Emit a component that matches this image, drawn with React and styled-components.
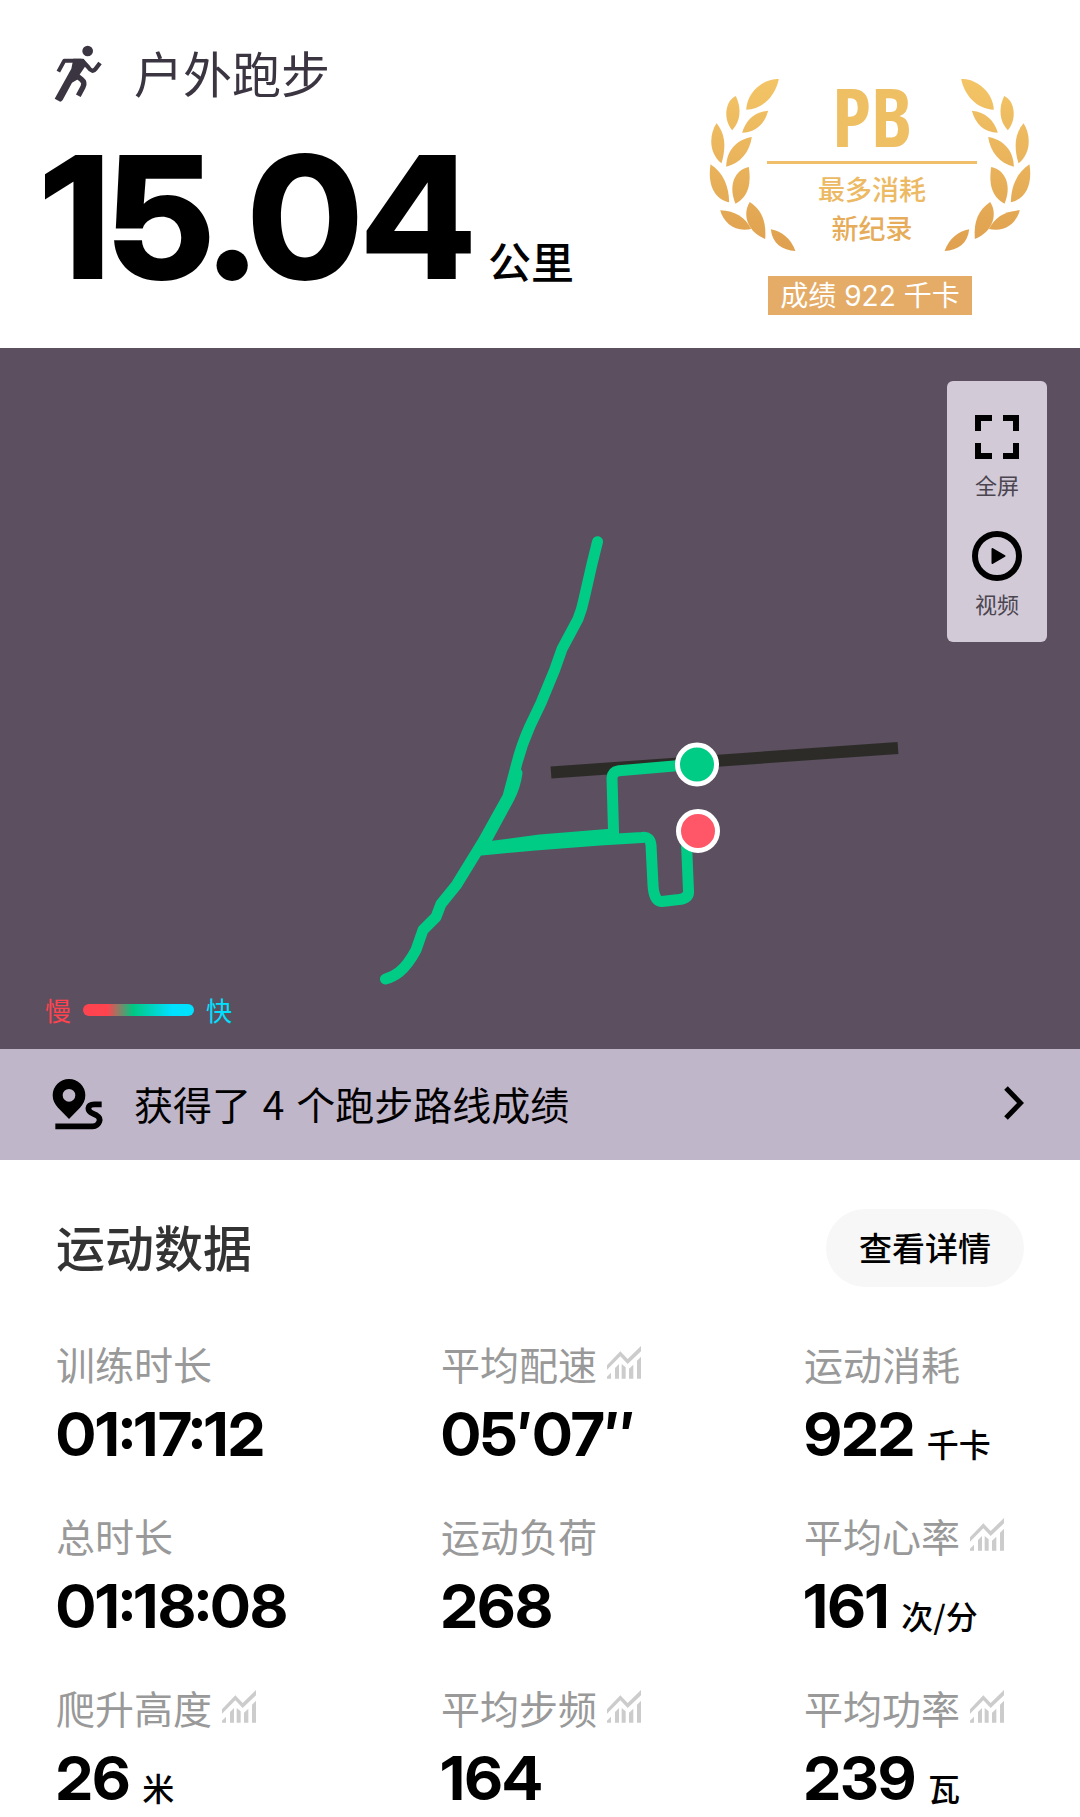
import React from 'react';
import styled, { createGlobalStyle } from 'styled-components';

const cjk = '"Noto Sans CJK SC", sans-serif';
const digits = '"Inter Display", Inter, "Noto Sans CJK SC", sans-serif';

const GlobalStyle = createGlobalStyle`
  *, *::before, *::after { box-sizing: border-box; }
  body { margin: 0; background: #fff; color: #000; font-family: ${cjk}; }
  h1, h2, p, dl, dt, dd { margin: 0; font-weight: inherit; }
  svg { display: block; flex: none; }
  button { border: 0; padding: 0; font: inherit; color: inherit; background: none; cursor: pointer; }
`;

const Page = styled.main`
  width: 100%;
  overflow: hidden;
`;

const Header = styled.header`
  display: flex;
  justify-content: space-between;
  align-items: flex-start;
  min-height: 348px;
  padding: 36px 49px 0 42px;
`;

const Activity = styled.div`
  display: flex;
  align-items: flex-start;
  gap: 20px;
  padding-left: 2px;
  color: #3b3542;
`;

const ActivityName = styled.h1`
  font-size: 49px;
  line-height: 72px;
`;

const Distance = styled.p`
  display: flex;
  align-items: baseline;
  gap: 12px;
  margin-top: 17px;
`;

const DistanceValue = styled.span`
  font: 800 170px/176px ${digits};
`;

const DistanceUnit = styled.span`
  font-size: 43px;
  line-height: 48px;
  font-weight: 500;
`;

const Badge = styled.section`
  display: flex;
  flex-direction: column;
  align-items: center;
  gap: 25px;
  width: 322px;
  margin-top: 43px;
`;

const Wreath = styled.div`
  display: grid;
  justify-items: center;
  > * { grid-area: 1 / 1; }
`;

const Award = styled.div`
  display: flex;
  flex-direction: column;
  align-items: center;
  width: 210px;
  margin-left: 4px;
`;

const AwardTitle = styled.strong`
  font: 800 81px/74px "Open Sans Condensed", "Open Sans", sans-serif;
  color: #efbf63;
`;

const AwardRule = styled.span`
  width: 100%;
  height: 3px;
  margin: 8px 0 5px;
  background: #efc069;
`;

const AwardLine = styled.span`
  font-size: 27px;
  line-height: 39px;
  font-weight: 500;
  color: ${(p) => (p.$deep ? '#e6ac5a' : '#ecb964')};
`;

const AwardTag = styled.p`
  padding: 2px 12px 0;
  font: 400 28px/37px Inter, ${cjk};
  color: #fff;
  background: #e4ac67;
  white-space: nowrap;
`;

const MapSection = styled.section`
  position: relative;
  background: #5b4f60;
`;

const RouteMap = styled.svg`
  width: 100%;
  height: auto;
`;

const Tools = styled.div`
  position: absolute;
  top: 33px;
  right: 33px;
  display: flex;
  flex-direction: column;
  align-items: center;
  gap: 31px;
  width: 100px;
  padding: 31px 0 23px;
  border-radius: 6px;
  background: #d2cad7;
`;

const Tool = styled.button`
  display: flex;
  flex-direction: column;
  align-items: center;
  color: #4b4550;
  font-size: 22px;
  line-height: 32px;
  gap: 6px;
  svg { color: #000; }
`;

const Legend = styled.div`
  position: absolute;
  left: 45px;
  bottom: 20px;
  display: flex;
  align-items: center;
  gap: 12px;
  font-size: 26px;
  line-height: 38px;
`;

const Speed = styled.span`
  color: ${(p) => p.$tone};
`;

const SpeedScale = styled.span`
  width: 111px;
  height: 12px;
  border-radius: 6px;
  background: linear-gradient(90deg, #ff444f 22%, #00c882 45%, #00e0ff 80%);
`;

const Achievements = styled.a`
  display: flex;
  align-items: center;
  gap: 20px;
  height: 111px;
  padding: 0 56px 3px 44px;
  color: #000;
  background: #c0b6c9;
  font-size: 39px;
  line-height: 56px;
  text-decoration: none;
`;

const AchievementText = styled.span`
  flex: 1;
`;

const Count = styled.span`
  margin: 0 3px;
`;

const Data = styled.section`
  padding: 49px 56px 0;
`;

const DataHead = styled.div`
  display: flex;
  align-items: center;
  justify-content: space-between;
`;

const DataTitle = styled.h2`
  padding-bottom: 4px;
  font-size: 49px;
  line-height: 74px;
  font-weight: 500;
  color: #333;
`;

const DetailButton = styled.button`
  && {
    height: 78px;
    padding: 0 33px 2px;
    border-radius: 39px;
    background: #f7f7f7;
    font-size: 33px;
    line-height: 48px;
    font-weight: 500;
  }
`;

const Stats = styled.dl`
  display: grid;
  grid-template-columns: 385fr 363fr 220fr;
  row-gap: 30px;
  margin-top: 48px;
`;

const StatLabel = styled.dt`
  display: flex;
  align-items: center;
  gap: 10px;
  height: 56px;
  font-size: 39px;
  color: #999;
  white-space: nowrap;
`;

const StatValue = styled.dd`
  display: flex;
  align-items: flex-end;
  gap: 12px;
  font: 700 61px/86px ${digits};
  white-space: nowrap;
`;

const StatUnit = styled.span`
  font: 500 32px/68px ${cjk};
`;

const RunnerIcon = () => (
  <svg width="70" height="76" viewBox="0 0 210 228" fill="none" stroke="currentColor" aria-hidden="true">
    <circle cx="131" cy="45" r="16" fill="currentColor" stroke="none" />
    <path d="M43 107 L61 74 H112" strokeWidth="12" strokeLinejoin="round" />
    <path d="M114 73 L133 94 Q145 112 155 98 L168 81" strokeWidth="13" />
    <path d="M88 68 H118 Q126 74 126 88 L104 120 L108 126 L84 140 L56 192 Q50 199 46 196 L32 188 L82 98 Z" fill="currentColor" stroke="none" />
    <path d="M92 114 L113 131 Q124 140 117 153 L103 179" strokeWidth="16" />
  </svg>
);

const leaves = [
  'M295 87 C250 85 200 125 197 179 C250 177 285 135 295 87Z',
  'M166 138 C136 150 125 205 155 241 C180 215 184 175 166 138Z',
  'M263 182 C222 185 195 212 185 248 C226 247 252 222 263 182Z',
  'M108 220 C85 255 85 310 123 340 C135 300 138 255 108 220Z',
  'M214 261 C170 268 138 300 137 350 C180 340 208 305 214 261Z',
  'M90 343 C82 395 95 445 146 457 C145 410 130 370 90 343Z',
  'M205 351 C160 360 143 410 165 461 C205 440 212 400 205 351Z',
  'M208 456 C185 490 198 545 254 567 C258 515 244 480 208 456Z',
  'M119 481 C130 520 165 548 212 537 C195 503 165 483 119 481Z',
  'M271 538 C275 580 305 602 345 603 C330 565 305 545 271 538Z',
];

const Laurels = () => (
  <svg width="322" height="172" viewBox="87 87 963 516" aria-hidden="true">
    <defs>
      <linearGradient id="gold" gradientUnits="userSpaceOnUse" x1="0" y1="87" x2="0" y2="603">
        <stop offset="0" stopColor="#f3c566" />
        <stop offset="1" stopColor="#dfa04f" />
      </linearGradient>
      <g id="branch" fill="url(#gold)">
        {leaves.map((d) => <path key={d} d={d} />)}
      </g>
    </defs>
    <use href="#branch" />
    <use href="#branch" transform="translate(1137 0) scale(-1 1)" />
  </svg>
);

const FullscreenIcon = () => (
  <svg width="50" height="50" viewBox="0 0 50 50" fill="none" stroke="currentColor" strokeWidth="6" aria-hidden="true">
    <path d="M20 6H6V19M31 6H44V19M20 44H6V31M31 44H44V31" />
  </svg>
);

const PlayIcon = () => (
  <svg width="50" height="50" viewBox="0 0 50 50" aria-hidden="true">
    <circle cx="25" cy="25" r="22" fill="none" stroke="currentColor" strokeWidth="6" />
    <path d="M20.500 18 L32.500 25 L20.500 32Z" fill="currentColor" stroke="currentColor" strokeWidth="2" strokeLinejoin="round" />
  </svg>
);

const RouteIcon = () => (
  <svg width="70" height="70" viewBox="0 0 210 210" aria-hidden="true">
    <path fillRule="evenodd" fill="currentColor" d="M75 153 L42 119 Q26 102 26 82 A49 49 0 0 1 124 82 Q124 102 108 119 Z M75 63 A19 19 0 1 0 75 101 A19 19 0 1 0 75 63Z" />
    <path fill="none" stroke="currentColor" strokeWidth="17" d="M173 109 H151 Q134 109 133 121 Q133 131 147 137 L158 142 Q170 149 166 161 Q161 175 146 175 H34" />
  </svg>
);

const ChevronIcon = () => (
  <svg width="20" height="34" viewBox="0 0 20 34" fill="none" stroke="currentColor" strokeWidth="5" aria-hidden="true">
    <path d="M2 2 L16.500 17 L2 32" />
  </svg>
);

const TrendIcon = () => (
  <svg width="34" height="34" viewBox="0 0 102 102" fill="#ccc" aria-hidden="true">
    <path d="M0 58 L40 16 L62 39 L102 0 V16 L62 54 L40 31 L0 71Z" />
    <path d="M0 92 L12 80 V98 H0Z M24 66 L36 54 V98 H24Z M44 54 L56 64 V98 H44Z M66 68 L79 56 V98 H66Z M90 44 L102 32 V98 H90Z" />
  </svg>
);

const trunk =
  'M597.500 193.700 L592 216 L584 251 Q582 261 578 271 L562 301 L554.600 322 L541 355 L530 378 Q521 398 516 418.700 L508 448.700 L483 493.700 L456.400 537 L441 556 L436 569 L423 582 L416 602 Q408 617 399.300 624 Q393 629 385.500 631';

const RouteDrawing = () => (
  <RouteMap viewBox="0 0 1080 701" fill="none" role="img" aria-label="跑步轨迹">
    <path d="M551 424.500 L898 400" stroke="#2d2b27" strokeWidth="12" />
    <g stroke="#00cc85" strokeWidth="11" strokeLinecap="round" strokeLinejoin="round">
      <path d={trunk} />
      <path d="M517 425 Q515 439 509 450 L482 500" />
      <path d="M481.500 502 L535 497 L600 492 L642 489.500 Q650 488 651 497 L653 537 Q654 554 662 553.500 L679 551.500 Q689 550 688.500 543 L686.500 495" />
      <path d="M487 499 L540 492 L613.600 486 L612 430 Q612 424 619 422.700 L680 417.500" />
    </g>
    <g stroke="#fff" strokeWidth="5">
      <circle cx="697" cy="416.500" r="19.500" fill="#00cc85" />
      <circle cx="698" cy="483" r="19.500" fill="#ff5668" />
    </g>
  </RouteMap>
);

const stats = [
  { label: '训练时长', value: '01:17:12' },
  { label: '平均配速', value: '05′07″', trend: true },
  { label: '运动消耗', value: '922', unit: '千卡' },
  { label: '总时长', value: '01:18:08' },
  { label: '运动负荷', value: '268' },
  { label: '平均心率', value: '161', unit: '次/分', trend: true },
  { label: '爬升高度', value: '26', unit: '米', trend: true },
  { label: '平均步频', value: '164', trend: true },
  { label: '平均功率', value: '239', unit: '瓦', trend: true },
];

export default function App() {
  return (
    <Page>
      <GlobalStyle />
      <Header>
        <div>
          <Activity>
            <RunnerIcon />
            <ActivityName>户外跑步</ActivityName>
          </Activity>
          <Distance>
            <DistanceValue>15.04</DistanceValue>
            <DistanceUnit>公里</DistanceUnit>
          </Distance>
        </div>
        <Badge>
          <Wreath>
            <Laurels />
            <Award>
              <AwardTitle>PB</AwardTitle>
              <AwardRule />
              <AwardLine>最多消耗</AwardLine>
              <AwardLine $deep>新纪录</AwardLine>
            </Award>
          </Wreath>
          <AwardTag>成绩 922 千卡</AwardTag>
        </Badge>
      </Header>

      <MapSection>
        <RouteDrawing />
        <Tools>
          <Tool type="button"><FullscreenIcon />全屏</Tool>
          <Tool type="button"><PlayIcon />视频</Tool>
        </Tools>
        <Legend>
          <Speed $tone="#ff444f">慢</Speed>
          <SpeedScale />
          <Speed $tone="#00e0ff">快</Speed>
        </Legend>
      </MapSection>

      <Achievements href="#routes">
        <RouteIcon />
        <AchievementText>获得了 <Count>4</Count> 个跑步路线成绩</AchievementText>
        <ChevronIcon />
      </Achievements>

      <Data>
        <DataHead>
          <DataTitle>运动数据</DataTitle>
          <DetailButton type="button">查看详情</DetailButton>
        </DataHead>
        <Stats>
          {stats.map((s) => (
            <div key={s.label}>
              <StatLabel>{s.label}{s.trend && <TrendIcon />}</StatLabel>
              <StatValue>{s.value}{s.unit && <StatUnit>{s.unit}</StatUnit>}</StatValue>
            </div>
          ))}
        </Stats>
      </Data>
    </Page>
  );
}
